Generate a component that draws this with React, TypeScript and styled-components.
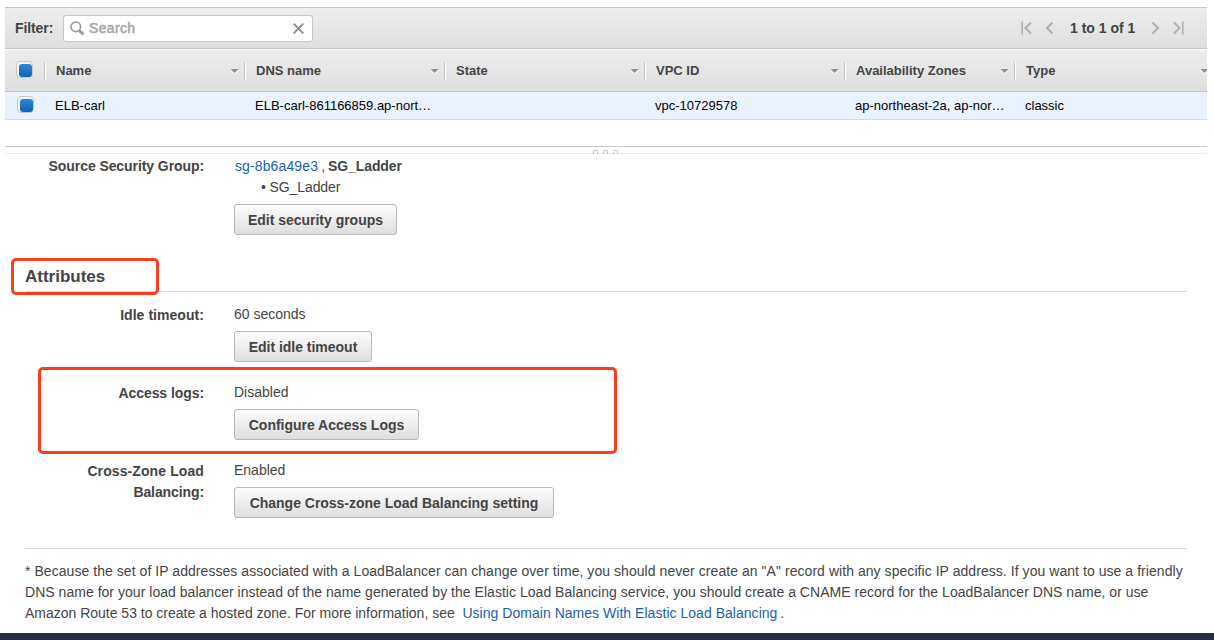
import React from 'react';
import styled, { createGlobalStyle } from 'styled-components';

const GlobalStyle = createGlobalStyle`
  * { box-sizing: border-box; }
  body {
    margin: 0;
    background: #fff;
    color: #444;
    font-family: "Liberation Sans", Arial, sans-serif;
    font-size: 14px;
    line-height: 21px;
    overflow: hidden;
  }
`;

const Page = styled.div`
  display: flex;
  flex-direction: column;
  height: 640px;
  padding-top: 7px;
`;

const ListPane = styled.section`
  width: 1202px;
  height: 140px;
  margin-left: 5px;
  border-bottom: 1px solid #c9c9c9;
`;

const Toolbar = styled.div`
  display: flex;
  align-items: center;
  height: 42px;
  padding: 0 23px 0 10px;
  border-top: 1px solid #c8c8c8;
  border-bottom: 1px solid #c4c4c4;
  background: linear-gradient(#ededed, #dedede);
`;

const FilterLabel = styled.label`
  width: 48px;
  font-weight: bold;
  letter-spacing: -0.1px;
`;

const SearchBox = styled.div`
  display: flex;
  align-items: center;
  width: 250px;
  height: 27px;
  padding: 0 8px 0 6px;
  border: 1px solid #c6c6c6;
  border-radius: 3px;
  background: #fff;
`;

const SearchText = styled.span`
  flex: 1;
  margin-left: 4px;
  color: #a5a5a5;
  letter-spacing: 0.35px;
  -webkit-text-stroke: 0.5px #a5a5a5;
`;

const Pager = styled.nav`
  display: flex;
  align-items: center;
  margin-left: auto;
  svg { display: block; }
`;

const PagerGap = styled.span`
  width: 12px;
`;

const PageRange = styled.span`
  width: 66px;
  margin: 0 14px 0 15px;
  font-weight: bold;
  white-space: nowrap;
`;

const HeaderRow = styled.div`
  display: flex;
  align-items: center;
  height: 43px;
  border-top: 1px solid #fff;
  border-bottom: 1px solid #c4c4c4;
  background: linear-gradient(#ededed, #dedede);
  overflow: hidden;
`;

const DataRow = styled.div`
  display: flex;
  align-items: center;
  height: 28px;
  border-bottom: 1px solid #d8dce2;
  background: #e9f2fe;
  color: #000;
  overflow: hidden;
`;

const CheckCell = styled.div<{ $inset: number }>`
  flex: none;
  width: 39px;
  padding-left: ${p => p.$inset}px;
  padding-bottom: 2px;
`;

const HeaderCell = styled.div<{ $width: number }>`
  display: flex;
  flex: none;
  align-items: center;
  justify-content: space-between;
  width: ${p => p.$width}px;
  height: 18px;
  padding: 0 5px 0 10px;
  border-left: 1px solid #c2c2c2;
  box-shadow: inset 1px 0 #fff;
  font-size: 13px;
  font-weight: bold;
`;

const HeaderText = styled.span`
  margin-left: 1px;
`;

const DataCell = styled.div<{ $width: number }>`
  flex: none;
  width: ${p => p.$width}px;
  padding-left: 11px;
  font-size: 13px;
  white-space: nowrap;
`;

const SelectBox = styled.span`
  display: block;
  width: 17px;
  height: 17px;
  padding: 2px 0 0 2px;
  border: 1px solid #c8c8c8;
  border-radius: 4px;
  background: #f6f6f6;
  &::before {
    content: "";
    display: block;
    height: 13px;
    border-radius: 3px;
    background: linear-gradient(#2f86d6, #1462b4);
  }
`;

const Splitter = styled.div`
  display: flex;
  justify-content: center;
  gap: 5px;
  width: 1202px;
  height: 7px;
  margin-left: 5px;
  padding: 3px 2px 0 0;
  border-bottom: 1px solid #ebebeb;
`;

const Grip = styled.i`
  width: 5px;
  height: 4px;
  border: 1px solid #c6c6c6;
  border-bottom: 0;
  border-radius: 2px 2px 0 0;
`;

const Details = styled.main`
  width: 1162px;
  margin: 0 0 0 25px;
`;

const Field = styled.div<{ $height: number }>`
  display: flex;
  height: ${p => p.$height}px;
`;

const Label = styled.div<{ $spacing?: number; $drop?: number }>`
  width: 179px;
  padding-top: ${p => p.$drop ?? 1}px;
  margin-right: 30px;
  font-weight: bold;
  text-align: right;
  letter-spacing: ${p => p.$spacing ?? 0}px;
`;

const Value = styled.div<{ $drop?: number }>`
  display: flex;
  flex-direction: column;
  align-items: flex-start;
  padding-top: ${p => p.$drop ?? 0}px;
`;

const Line = styled.div<{ $indent?: number; $spacing?: number }>`
  padding-left: ${p => p.$indent ?? 0}px;
  letter-spacing: ${p => p.$spacing ?? 0}px;
  white-space: pre;
`;

const Link = styled.a<{ $spacing?: number }>`
  color: #1a5fb4;
  letter-spacing: ${p => p.$spacing ?? 0}px;
`;

const Button = styled.button<{ $width: number }>`
  width: ${p => p.$width}px;
  height: 31px;
  margin: 6px 0 0;
  padding: 1px 0 0;
  border: 1px solid #b9b9b9;
  border-radius: 3px;
  background: linear-gradient(#fdfdfd, #dedede);
  color: #444;
  font: bold 14px/28px "Liberation Sans", Arial, sans-serif;
  letter-spacing: -0.02px;
  white-space: nowrap;
`;

const SectionTitle = styled.h2`
  position: relative;
  height: 37px;
  margin: 0 0 12px;
  padding-top: 11px;
  border-bottom: 1px solid #dcdcdc;
  font-size: 17px;
  line-height: 21px;
`;

const Marker = styled.div<{ $left: number; $top: number; $width: number; $height: number }>`
  position: absolute;
  left: ${p => p.$left}px;
  top: ${p => p.$top}px;
  width: ${p => p.$width}px;
  height: ${p => p.$height}px;
  border: 3px solid #fb3c1f;
  border-radius: 5px;
  pointer-events: none;
`;

const MarkedField = styled(Field)`
  position: relative;
`;

const Note = styled.div`
  padding-top: 12px;
  border-top: 1px solid #dcdcdc;
`;

const Footer = styled.footer`
  height: 7px;
  margin-top: auto;
  background: #232f3d;
`;

const columns = [
  { title: 'Name', value: 'ELB-carl', width: 200 },
  { title: 'DNS name', value: 'ELB-carl-861166859.ap-nort…', width: 200 },
  { title: 'State', value: '', width: 200 },
  { title: 'VPC ID', value: 'vpc-10729578', width: 200 },
  { title: 'Availability Zones', value: 'ap-northeast-2a, ap-nor…', width: 170 },
  { title: 'Type', value: 'classic', width: 200 },
];

const SortArrow = () => (
  <svg width="9" height="6" viewBox="0 0 9 6">
    <path d="M0.5 2L4.5 6L8.5 2" fill="none" stroke="#fff" />
    <path d="M0.5 1H8.5L4.5 5Z" fill="#929292" />
  </svg>
);

const Chevron = ({ flip = false, bar = false }) => (
  <svg width="11" height="14" viewBox="0 0 11 14" fill="none" stroke="#b0b0b0" strokeWidth="2">
    <g transform={flip ? 'translate(11 0) scale(-1 1)' : undefined}>
      <path d={bar ? 'M10 1.5L4.5 7L10 12.5' : 'M8.5 1.5L3 7L8.5 12.5'} />
      {bar && <path d="M1.2 0.5V13.5" strokeWidth="1.6" />}
    </g>
  </svg>
);

export default function App() {
  return (
    <Page>
      <GlobalStyle />
      <ListPane>
        <Toolbar>
          <FilterLabel>Filter:</FilterLabel>
          <SearchBox>
            <svg width="15" height="15" viewBox="0 0 15 15" fill="none" stroke="#999">
              <circle cx="5.8" cy="5.8" r="4.8" strokeWidth="1.6" />
              <path d="M9.2 9.6L13.5 13.4" strokeWidth="2.8" />
            </svg>
            <SearchText>Search</SearchText>
            <svg width="11" height="11" viewBox="0 0 11 11" stroke="#8c8c8c" strokeWidth="1.9">
              <path d="M0.7 0.7L10.3 10.3M10.3 0.7L0.7 10.3" />
            </svg>
          </SearchBox>
          <Pager>
            <Chevron bar />
            <PagerGap />
            <Chevron />
            <PageRange>1 to 1 of 1</PageRange>
            <Chevron flip />
            <PagerGap />
            <Chevron flip bar />
          </Pager>
        </Toolbar>
        <HeaderRow>
          <CheckCell $inset={11}><SelectBox /></CheckCell>
          {columns.map(c => (
            <HeaderCell key={c.title} $width={c.width}>
              <HeaderText>{c.title}</HeaderText>
              <SortArrow />
            </HeaderCell>
          ))}
        </HeaderRow>
        <DataRow>
          <CheckCell $inset={12}><SelectBox /></CheckCell>
          {columns.map(c => <DataCell key={c.title} $width={c.width}>{c.value}</DataCell>)}
        </DataRow>
      </ListPane>
      <Splitter><Grip /><Grip /><Grip /></Splitter>
      <Details>
        <Field $height={101}>
          <Label $drop={2} $spacing={-0.08}>Source Security Group:</Label>
          <Value $drop={2}>
            <Line $indent={1}><Link $spacing={0.12}>sg-8b6a49e3</Link><Line as="span" $spacing={-0.6}> , </Line><Line as="b" $spacing={-0.08}>SG_Ladder</Line></Line>
            <Line $indent={27} $spacing={-0.1}>• SG_Ladder</Line>
            <Button $width={163}>Edit security groups</Button>
          </Value>
        </Field>
        <SectionTitle>
          Attributes
          <Marker $left={-14} $top={3} $width={148} $height={37} />
        </SectionTitle>
        <Field $height={78}>
          <Label $spacing={0.05}>Idle timeout:</Label>
          <Value>
            <Line>60 seconds</Line>
            <Button $width={138}>Edit idle timeout</Button>
          </Value>
        </Field>
        <MarkedField $height={78}>
          <Label $spacing={-0.07}>Access logs:</Label>
          <Value>
            <Line>Disabled</Line>
            <Button $width={185}>Configure Access Logs</Button>
          </Value>
          <Marker $left={13} $top={-15} $width={579} $height={87} />
        </MarkedField>
        <Field $height={88}>
          <Label $spacing={0.1}>Cross-Zone Load<br /><Line as="span" $spacing={-0.1}>Balancing:</Line></Label>
          <Value>
            <Line>Enabled</Line>
            <Button $width={320}>Change Cross-zone Load Balancing setting</Button>
          </Value>
        </Field>
        <Note>
          <Line $spacing={0.053}>* Because the set of IP addresses associated with a LoadBalancer can change over time, you should never create an "A" record with any specific IP address. If you want to use a friendly</Line>
          <Line $spacing={0.03}>DNS name for your load balancer instead of the name generated by the Elastic Load Balancing service, you should create a CNAME record for the LoadBalancer DNS name, or use</Line>
          <Line><Line as="span" $spacing={-0.01}>Amazon Route 53 to create a hosted zone. For more information, see  </Line><Link $spacing={0.03}>Using Domain Names With Elastic Load Balancing</Link><Line as="span" $spacing={-1}> .</Line></Line>
        </Note>
      </Details>
      <Footer />
    </Page>
  );
}
